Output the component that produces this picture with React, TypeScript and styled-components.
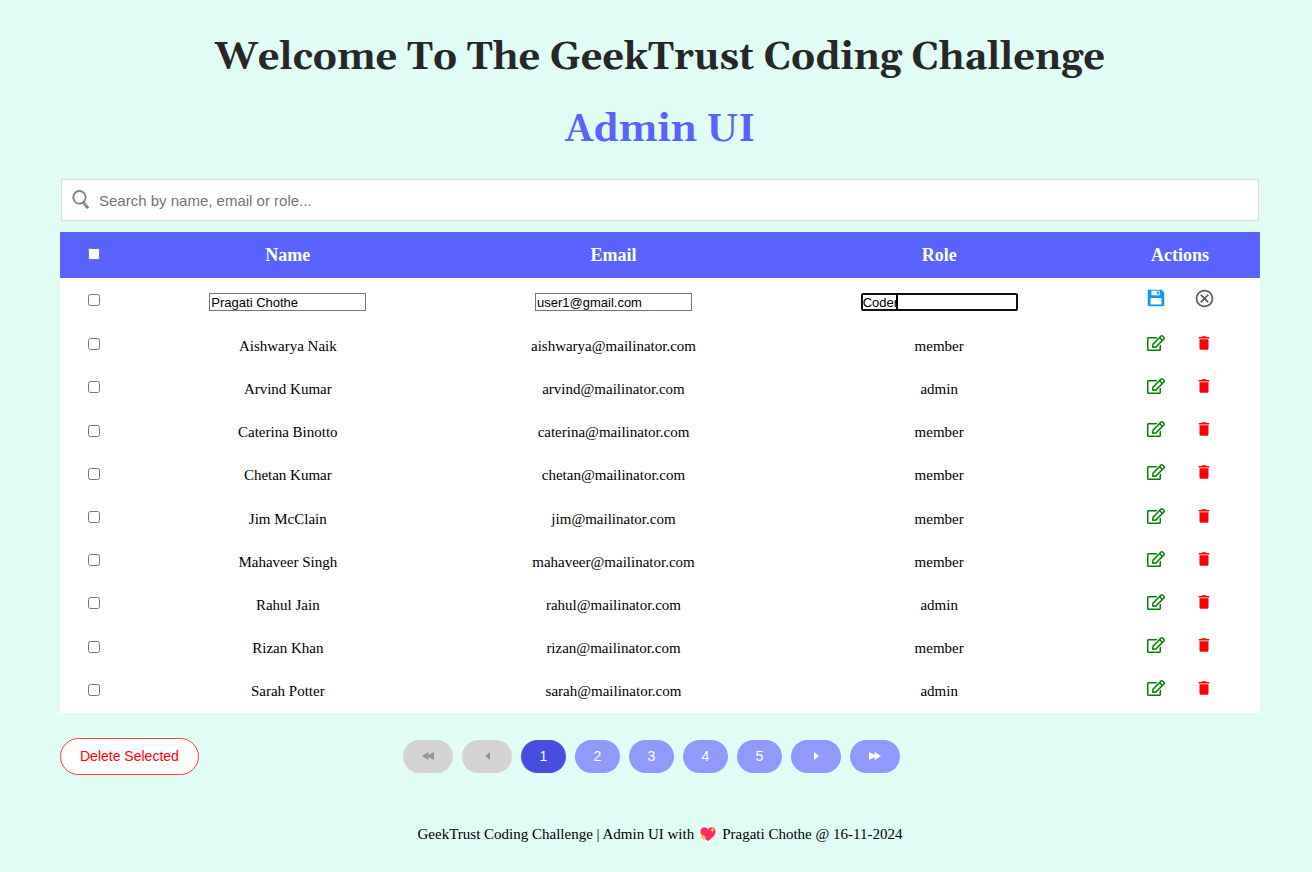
import React, { useState } from "react";
import styled, { createGlobalStyle } from "styled-components";
import { FaRegEdit } from "react-icons/fa";
import { MdDelete, MdOutlineCancel } from "react-icons/md";
import { RiSave3Fill } from "react-icons/ri";

const serif = `"Liberation Serif", "Times New Roman", serif`;
const sans = `"Liberation Sans", Arial, sans-serif`;

const GlobalStyle = createGlobalStyle`
  *, *::before, *::after { box-sizing: border-box; }
  body {
    margin: 0;
    background: #e1fdf6;
    color: #000;
    font-family: ${serif};
    font-size: 15px;
  }
`;

const Page = styled.main`
  padding: 33px 52px 28px 60px;
`;

const Title = styled.h1<{ $accent?: boolean }>`
  margin: 0 0 22px;
  font-family: Georgia, Gelasio, ${serif};
  font-size: 38px;
  line-height: 50px;
  font-weight: 700;
  text-align: center;
  color: ${(p) => (p.$accent ? "#5a62ff" : "#272727")};
`;

const SearchBox = styled.label`
  display: flex;
  align-items: center;
  gap: 9px;
  height: 42px;
  margin: 24px 1px 11px;
  padding: 0 10px;
  background: #fff;
  border: 1px solid #ddd;
`;

const SearchInput = styled.input`
  flex: 1;
  min-width: 0;
  padding: 0;
  border: 0;
  outline: 0;
  background: transparent;
  font-family: ${sans};
  font-size: 15px;
  &::placeholder { color: #757575; }
`;

const Table = styled.table`
  width: 100%;
  height: 481px;
  table-layout: fixed;
  border-collapse: collapse;
  background: #fff;
  text-align: center;
`;

const CheckCol = styled.col`width: 65px;`;
const ActionsCol = styled.col`width: 158px;`;

const HeadRow = styled.tr`
  height: 46px;
  background: #5a62ff;
  color: #fff;
`;

const BodyRow = styled.tr<{ $editing?: boolean }>`
  height: ${(p) => (p.$editing ? 46 : 43)}px;
`;

const HeadCell = styled.th<{ $last?: boolean }>`
  padding: 0 ${(p) => (p.$last ? 2 : 0)}px 0 0;
  font-size: 18px;
  line-height: 20px;
`;

const Cell = styled.td<{ $editing?: boolean }>`
  padding: ${(p) => (p.$editing ? 2 : 0)}px 0 0;
  line-height: 18px;
`;

const CheckCell = styled.td`
  padding: 0 0 3px 3px;
`;

const ActionsCell = styled.td`
  padding: 0 2px 6px 0;
`;

const Checkbox = styled.input.attrs({ type: "checkbox" })`
  display: block;
  width: 12px;
  height: 12px;
  margin: 0 auto;
`;

const FieldWrap = styled.span`
  position: relative;
  display: block;
  width: 157px;
  margin: 0 auto;
`;

const Field = styled.input<{ $active?: boolean }>`
  display: block;
  width: 100%;
  height: 18px;
  padding: ${(p) => (p.$active ? "0" : "0 1px")};
  border: ${(p) => (p.$active ? "2px solid #101010" : "1px solid #767676")};
  border-radius: ${(p) => (p.$active ? 2 : 0)}px;
  outline: 0;
  background: #fff;
  caret-color: transparent;
  font-family: ${sans};
  font-size: 13px;
`;

const Caret = styled.span`
  position: absolute;
  top: 1px;
  left: 35px;
  width: 2px;
  height: 16px;
  background: #000;
`;

const Actions = styled.div`
  display: flex;
  justify-content: center;
  gap: 24px;
`;

const IconButton = styled.button<{ $color: string }>`
  display: flex;
  align-items: center;
  justify-content: center;
  width: 24px;
  height: 22px;
  padding: 0;
  border: 0;
  background: none;
  color: ${(p) => p.$color};
  cursor: pointer;
`;

const BottomBar = styled.div`
  display: grid;
  grid-template-columns: 1fr auto 1fr;
  align-items: center;
  margin-top: 25px;
  padding-right: 17px;
`;

const DeleteButton = styled.button`
  justify-self: start;
  height: 37px;
  padding: 0 19px 1px;
  border: 1px solid #f44336;
  border-radius: 19px;
  background: #fff;
  color: #f00;
  font-family: ${sans};
  font-size: 14px;
  cursor: pointer;
`;

const Pagination = styled.nav`
  display: flex;
  gap: 9px;
`;

const PageButton = styled.button<{ $current?: boolean; $wide?: boolean }>`
  display: flex;
  align-items: center;
  justify-content: center;
  width: ${(p) => (p.$wide ? 50 : 45)}px;
  height: 33px;
  padding: 0 0 1px;
  border: 0;
  border-radius: 17px;
  background: ${(p) => (p.$current ? "#484fde" : "#9199ff")};
  color: #fff;
  font-family: ${sans};
  font-size: 14px;
  cursor: pointer;
  &:disabled {
    background: #d3d3d3;
    color: #969696;
    cursor: default;
  }
`;

const Footer = styled.footer`
  display: flex;
  align-items: center;
  justify-content: center;
  gap: 5px;
  margin-top: 50px;
  line-height: 18px;
`;

const SearchIcon = () => (
  <svg width="18" height="20" viewBox="0 0 18 20" fill="none" aria-hidden="true">
    <ellipse cx="7.400" cy="7.300" rx="6.200" ry="6.400" stroke="#a2a2a2" strokeWidth="2" />
    <ellipse cx="7.600" cy="7.300" rx="6" ry="6.300" stroke="#666" strokeWidth="0.800" />
    <path d="M11.600 12.600l3.800 4.600" stroke="#777" strokeWidth="3" strokeLinecap="round" />
    <path d="M12.400 13l2.400 3" stroke="#c8c8c8" strokeWidth="1" strokeLinecap="round" />
  </svg>
);

const Arrow = ({ double, back }: { double?: boolean; back?: boolean }) => (
  <svg width={double ? 12 : 5} height="8" viewBox={double ? "0 0 12 8" : "0 0 5 8"} fill="currentColor" aria-hidden="true">
    <g transform={back ? `translate(${double ? 12 : 5} 0) scale(-1 1)` : undefined}>
      <path d={double ? "M0 .8Q0 0 .7 .3L5.500 3V.8Q5.500 0 6.200 .3L12 4L6.200 7.700Q5.500 8 5.500 7.200V5L.7 7.700Q0 8 0 7.200Z" : "M0 0L5 4L0 8Z"} />
    </g>
  </svg>
);

const Heart = () => (
  <svg width="18" height="16" viewBox="0 0 18 16" role="img" aria-label="love">
    <path d="M9 15C6 12.800 1.400 9.600 1.400 5.500C1.400 2.900 3.200 1.200 5.300 1.200C6.900 1.200 8.300 2 9 3.400C9.700 2 11.100 1.200 12.700 1.200C14.800 1.200 16.600 2.900 16.600 5.500C16.600 9.600 12 12.800 9 15Z" fill="#fb2f63" />
    <path d="M4.600 8.200L5.600 10.600L8 11.600L5.600 12.600L4.600 15L3.600 12.600L1.200 11.600L3.600 10.600Z" fill="#ffc83d" />
    <path d="M13.400 1.600L14.100 3.300L15.800 4L14.100 4.700L13.400 6.400L12.700 4.700L11 4L12.700 3.300Z" fill="#ffc83d" />
    <circle cx="2.800" cy="9" r=".7" fill="#ffc83d" />
  </svg>
);

const users = [
  ["Aishwarya Naik", "aishwarya", "member"],
  ["Arvind Kumar", "arvind", "admin"],
  ["Caterina Binotto", "caterina", "member"],
  ["Chetan Kumar", "chetan", "member"],
  ["Jim McClain", "jim", "member"],
  ["Mahaveer Singh", "mahaveer", "member"],
  ["Rahul Jain", "rahul", "admin"],
  ["Rizan Khan", "rizan", "member"],
  ["Sarah Potter", "sarah", "admin"],
];

export default function App() {
  const [page, setPage] = useState(1);

  return (
    <>
      <GlobalStyle />
      <Page>
        <Title>Welcome To The GeekTrust Coding Challenge</Title>
        <Title as="h2" $accent>Admin UI</Title>

        <SearchBox>
          <SearchIcon />
          <SearchInput type="text" aria-label="Search" placeholder="Search by name, email or role..." />
        </SearchBox>

        <Table>
          <colgroup>
            <CheckCol />
            <col />
            <col />
            <col />
            <ActionsCol />
          </colgroup>
          <thead>
            <HeadRow>
              <CheckCell as="th"><Checkbox aria-label="Select all" /></CheckCell>
              <HeadCell>Name</HeadCell>
              <HeadCell>Email</HeadCell>
              <HeadCell>Role</HeadCell>
              <HeadCell $last>Actions</HeadCell>
            </HeadRow>
          </thead>
          <tbody>
            <BodyRow $editing>
              <CheckCell><Checkbox aria-label="Select Pragati Chothe" /></CheckCell>
              <Cell $editing><FieldWrap><Field aria-label="Name" defaultValue="Pragati Chothe" /></FieldWrap></Cell>
              <Cell $editing><FieldWrap><Field aria-label="Email" defaultValue="user1@gmail.com" /></FieldWrap></Cell>
              <Cell $editing><FieldWrap><Field aria-label="Role" defaultValue="Coder" $active /><Caret /></FieldWrap></Cell>
              <ActionsCell>
                <Actions>
                  <IconButton $color="#0c97ff" aria-label="Save"><RiSave3Fill size={22} /></IconButton>
                  <IconButton $color="#5f5f5f" aria-label="Cancel"><MdOutlineCancel size={21} /></IconButton>
                </Actions>
              </ActionsCell>
            </BodyRow>
            {users.map(([name, mail, role]) => (
              <BodyRow key={mail}>
                <CheckCell><Checkbox aria-label={`Select ${name}`} /></CheckCell>
                <Cell>{name}</Cell>
                <Cell>{mail}@mailinator.com</Cell>
                <Cell>{role}</Cell>
                <ActionsCell>
                  <Actions>
                    <IconButton $color="#008000" aria-label={`Edit ${name}`}><FaRegEdit size={18} /></IconButton>
                    <IconButton $color="#f00" aria-label={`Delete ${name}`}><MdDelete size={18} /></IconButton>
                  </Actions>
                </ActionsCell>
              </BodyRow>
            ))}
          </tbody>
        </Table>

        <BottomBar>
          <DeleteButton>Delete Selected</DeleteButton>
          <Pagination aria-label="Pages">
            <PageButton $wide disabled={page === 1} aria-label="First page" onClick={() => setPage(1)}><Arrow double back /></PageButton>
            <PageButton $wide disabled={page === 1} aria-label="Previous page" onClick={() => setPage(page - 1)}><Arrow back /></PageButton>
            {[1, 2, 3, 4, 5].map((n) => (
              <PageButton key={n} $current={n === page} onClick={() => setPage(n)}>{n}</PageButton>
            ))}
            <PageButton $wide disabled={page === 5} aria-label="Next page" onClick={() => setPage(page + 1)}><Arrow /></PageButton>
            <PageButton $wide disabled={page === 5} aria-label="Last page" onClick={() => setPage(5)}><Arrow double /></PageButton>
          </Pagination>
        </BottomBar>

        <Footer>
          <span>GeekTrust Coding Challenge | Admin UI with</span>
          <Heart />
          <span>Pragati Chothe @ 16-11-2024</span>
        </Footer>
      </Page>
    </>
  );
}
